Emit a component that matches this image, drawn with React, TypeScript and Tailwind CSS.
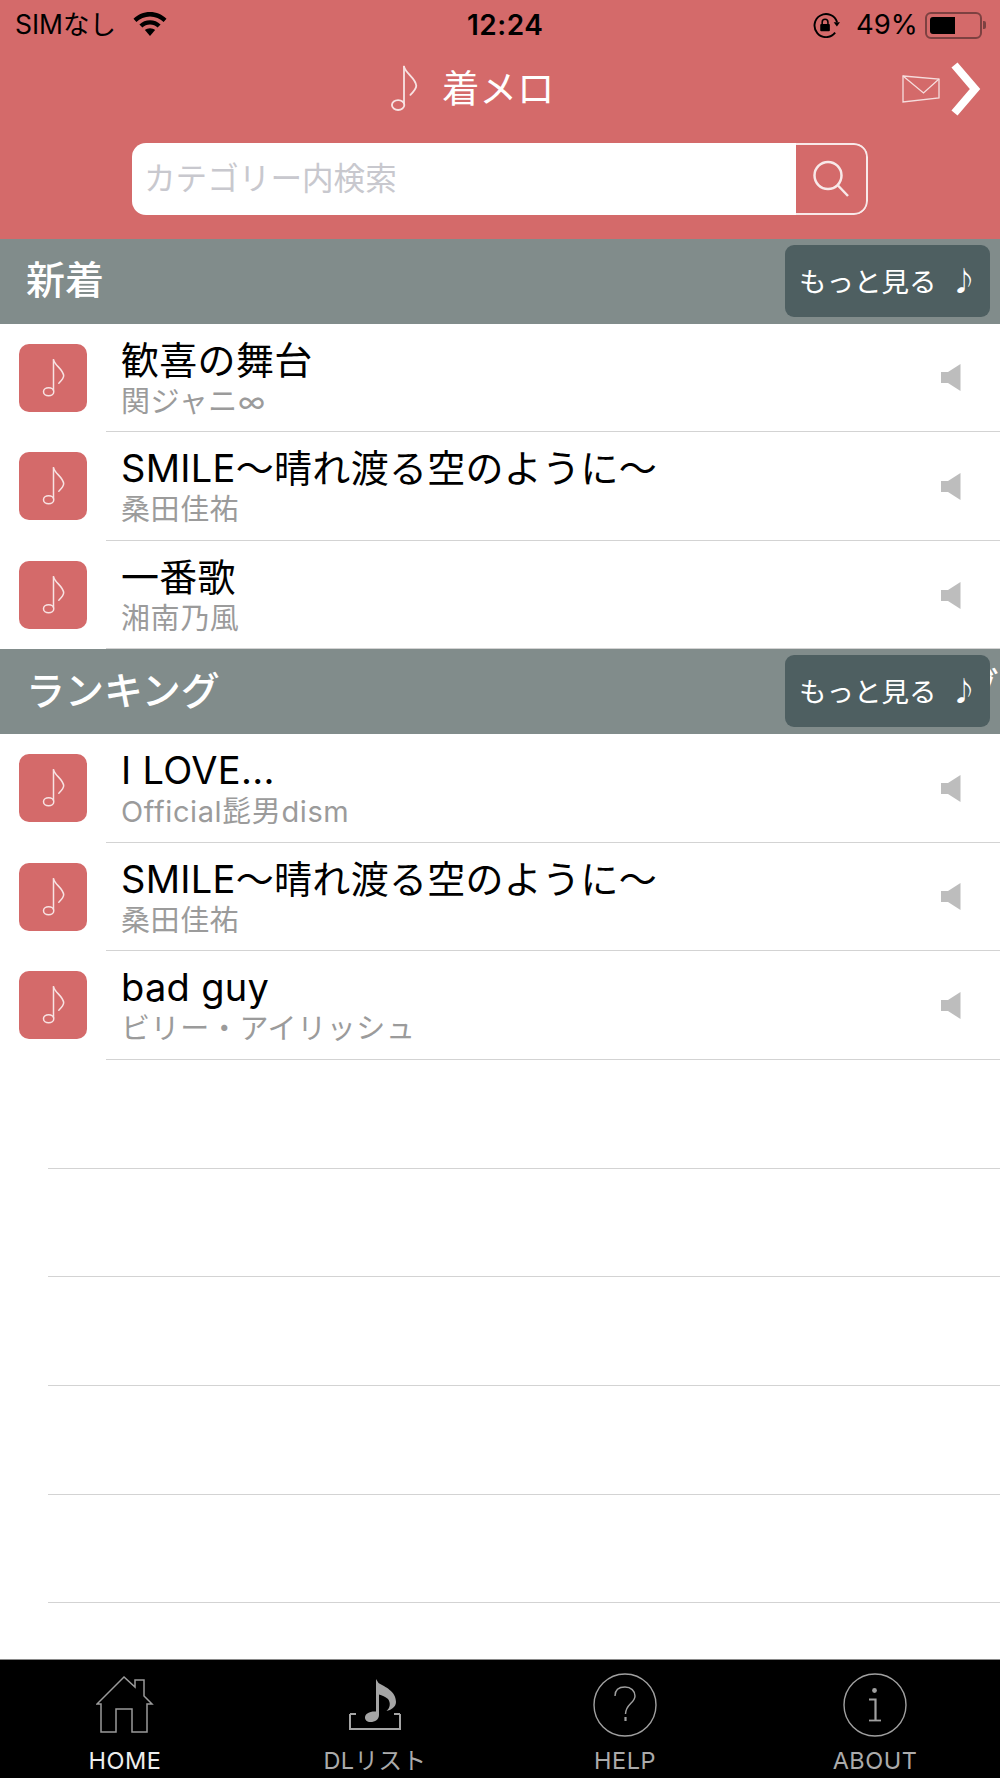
import React from "react";

function Note({ className }: { className: string }) {
  return (
    <svg viewBox="0 0 26 44" className={className} fill="none" stroke="currentColor" strokeWidth="1.7" strokeLinecap="round">
      <path d="M13 1.5V36" />
      <ellipse cx="7.5" cy="37.5" rx="5.8" ry="4.6" />
      <path d="M13 1.5C14.5 8 24 12 24.5 19.5C24.5 22.5 21.5 25.5 19 28" />
    </svg>
  );
}

function Speaker() {
  return (
    <svg viewBox="0 0 20 27" className="w-[20px] h-[27px] text-[#bdbdbd]" fill="currentColor">
      <path d="M0 8H7L19.5 0V27L7 19H0Z" />
    </svg>
  );
}

function Row({ title, sub }: { title: string; sub: string }) {
  return (
    <div className="flex h-[108.67px] pl-[19px] shrink-0">
      <div className="w-[68px] h-[68px] mt-[20px] rounded-[10px] bg-[#d46a6a] flex items-center justify-center">
        <Note className="w-[23px] h-[40px] text-[#f8e3e3]" />
      </div>
      <div className="flex-1 ml-[19px] pl-[15px] pr-[39px] border-b border-[#d3d3d3] flex items-center justify-between">
        <div className="self-start pt-[15px]">
          <div className="text-[38px] leading-[42px] tracking-[0.3px] text-black whitespace-nowrap">{title}</div>
          <div className="text-[29px] leading-[42px] tracking-[0.6px] text-[#9b9b9b] whitespace-nowrap">{sub}</div>
        </div>
        <div className="mt-[1px]">
          <Speaker />
        </div>
      </div>
    </div>
  );
}

function SectionBar({ title, overflow }: { title: string; overflow?: boolean }) {
  return (
    <div className="relative h-[84.5px] shrink-0 bg-[#818c8b] flex items-center justify-between pl-[26px] pr-[10px] overflow-hidden">
      <span className="text-[39px] leading-none font-medium text-white -mt-[3px]">{title}</span>
      {overflow && (
        <div className="absolute left-[990px] top-[16px] w-[10px] h-[44px] overflow-hidden">
          <span className="block -ml-[30px] text-[39px] leading-[44px] font-medium text-white">グ</span>
        </div>
      )}
      <div className="relative w-[205px] h-[72px] -mt-[1px] rounded-[9px] bg-[#4e5f61] flex items-center pl-[14px] text-white text-[27.5px] whitespace-nowrap">
        <span className="mt-[3px]">もっと見る</span>
        <span className="ml-[14px] mt-[2px] text-[27px] font-medium">♪</span>
      </div>
    </div>
  );
}

function Tab({ label, active, children }: { label: string; active?: boolean; children: React.ReactNode }) {
  return (
    <div className="w-[250px] flex flex-col items-center">
      <div className="h-[90px] flex items-center justify-center">{children}</div>
      <div className={`text-[23.5px] leading-[28px] -mt-[3px] tracking-[0.5px] ${active ? "text-[#eeeeee]" : "text-[#ababab]"}`}>{label}</div>
    </div>
  );
}

export default function App() {
  return (
    <div className="w-[1000px] h-[1778px] flex flex-col overflow-hidden bg-white [font-family:Inter,'Noto_Sans_CJK_JP',sans-serif]">
      <header className="h-[239px] shrink-0 bg-[#d46a6a] flex flex-col">
        <div className="h-[50px] flex items-center pl-[15px] pr-[12px] text-black text-[26.5px]">
          <span className="w-[118px] whitespace-nowrap">SIMなし</span>
          <svg viewBox="0 0 34 24" className="w-[34px] h-[24px] -mt-[2px]" fill="currentColor">
            <path d="M17 0C10.5 0 4.800 2.600 0.500 6.700L3.400 9.900C6.900 6.600 11.700 4.400 17 4.400S27.100 6.600 30.600 9.900L33.500 6.700C29.200 2.600 23.500 0 17 0Z" />
            <path d="M17 8.200C13 8.200 9.200 9.800 6.400 12.400L9.400 15.500C11.400 13.700 14 12.600 17 12.600S22.600 13.700 24.600 15.500L27.600 12.400C24.800 9.800 21 8.200 17 8.200Z" />
            <path d="M17 16.200C15 16.200 13.300 16.900 11.900 18.100L17 24L22.100 18.100C20.700 16.900 19 16.200 17 16.200Z" />
          </svg>
          <span className="ml-[300px] w-[80px] font-semibold text-[28px] tracking-[0.5px]">12:24</span>
          <svg viewBox="0 0 30 26" className="ml-[265px] w-[29px] h-[25px]" fill="none" stroke="currentColor" strokeWidth="2">
            <path d="M26 9.500A12 12 0 1 0 24 20.500" />
            <path d="M22.500 9.500H29L25.800 14Z" fill="currentColor" stroke="none" />
            <rect x="8.500" y="11.500" width="10" height="7.500" rx="1" fill="currentColor" stroke="none" />
            <path d="M10.500 11.500V9.500A3 3 0 0 1 16.500 9.500V11.500" strokeWidth="1.600" />
          </svg>
          <span className="ml-[15px] w-[69px] text-[27.5px] whitespace-nowrap">49%</span>
          <div className="w-[57px] h-[27px] rounded-[6px] border-2 border-[#7d4141] p-[3px]">
            <div className="w-[25px] h-full rounded-l-[3px] bg-black" />
          </div>
          <div className="w-[3px] h-[8px] ml-[1px] rounded-r-[2px] bg-[#7d4141]" />
        </div>

        <div className="h-[78px] flex items-center pl-[390px] pr-[19px] text-white">
          <Note className="w-[28px] h-[47px] text-[#f8e3e3] -mt-[2px]" />
          <span className="ml-[24px] text-[37.5px] leading-none whitespace-nowrap">着メロ</span>
          <svg viewBox="0 0 38 28" className="ml-auto w-[38px] h-[28px] -mt-[1px] text-[#f6dddd]" fill="none" stroke="currentColor" strokeWidth="1.300">
            <path d="M1 1L37 4V23L1 27Z" />
            <path d="M1 1L21.500 18L37 4" />
          </svg>
          <svg viewBox="0 0 30 54" className="ml-[11px] w-[30px] h-[54px] text-white" fill="none" stroke="currentColor" strokeWidth="8">
            <path d="M3.500 3L24 27L3.500 51" />
          </svg>
        </div>

        <div className="ml-[132px] mt-[15px] w-[736px] h-[72px] flex rounded-[14px] overflow-hidden">
          <div className="flex-1 bg-white flex items-center pl-[12px] text-[31.6px] text-[#c8c8ce] whitespace-nowrap">
            カテゴリー内検索
          </div>
          <div className="w-[72px] rounded-r-[14px] border-2 border-l-0 border-[#f8e9e9] flex items-center justify-center">
            <svg viewBox="0 0 38 38" className="w-[38px] h-[38px] text-[#f8e9e9]" fill="none" stroke="currentColor" strokeWidth="2.500">
              <circle cx="16" cy="15.500" r="13.500" />
              <path d="M26 25.500L36 36" />
            </svg>
          </div>
        </div>
      </header>

      <main className="flex-1 flex flex-col overflow-hidden">
        <SectionBar title="新着" />
        <Row title="歓喜の舞台" sub="関ジャニ∞" />
        <Row title="SMILE〜晴れ渡る空のように〜" sub="桑田佳祐" />
        <Row title="一番歌" sub="湘南乃風" />
        <SectionBar title="ランキング" overflow />
        <Row title="I LOVE..." sub="Official髭男dism" />
        <Row title="SMILE〜晴れ渡る空のように〜" sub="桑田佳祐" />
        <Row title="bad guy" sub="ビリー・アイリッシュ" />
        {[0, 1, 2, 3, 4].map((i) => (
          <div key={i} className="h-[108.67px] shrink-0 ml-[48px] border-b border-[#d3d3d3]" />
        ))}
      </main>

      <nav className="h-[119px] shrink-0 bg-black border-t border-[#8a8a8a] flex">
        <Tab label="HOME" active>
          <svg viewBox="0 0 58 58" className="w-[58px] h-[58px] text-[#9a9a9a]" fill="none" stroke="currentColor" strokeWidth="1.500">
            <path d="M28 1L1 28H5V56H20V33H36V56H51V28H56L48 20V4H39V11Z" />
          </svg>
        </Tab>
        <Tab label="DLリスト">
          <svg viewBox="0 0 52 54" className="w-[52px] h-[54px] text-[#a5a5a5]" fill="currentColor">
            <path d="M27 1L29.500 5C36 9 47 13 47 24C47 29 42 32 37.500 33C41 30 42 25 39 21C36.500 18.500 33 17.500 30 16.500V37C30 41.500 26 44 21.500 44C18 44 16 42 16 39.500C16 35.500 21 33 27 33.500Z" />
            <path d="M1 36H7M1 36V51H51V36M45 36H51" fill="none" stroke="currentColor" strokeWidth="2" />
          </svg>
        </Tab>
        <Tab label="HELP">
          <svg viewBox="0 0 64 64" className="w-[64px] h-[64px] text-[#a0a0a0]" fill="none" stroke="currentColor" strokeWidth="1.400">
            <circle cx="32" cy="32" r="31" />
            <path d="M22 23C22 17 26 14 32 14C38 14 42 18 42 23C42 30 32.500 31 32.500 41" />
            <path d="M32.500 44V48" strokeWidth="2.200" />
          </svg>
        </Tab>
        <Tab label="ABOUT">
          <svg viewBox="0 0 64 64" className="w-[64px] h-[64px] text-[#a0a0a0]" fill="none" stroke="currentColor" strokeWidth="1.400">
            <circle cx="32" cy="32" r="31" />
            <circle cx="31.500" cy="17.500" r="2.400" fill="currentColor" stroke="none" />
            <path d="M26 26.500H32.500V47" strokeWidth="2.200" />
            <path d="M26 47.500H38" strokeWidth="1.800" />
          </svg>
        </Tab>
      </nav>
    </div>
  );
}
